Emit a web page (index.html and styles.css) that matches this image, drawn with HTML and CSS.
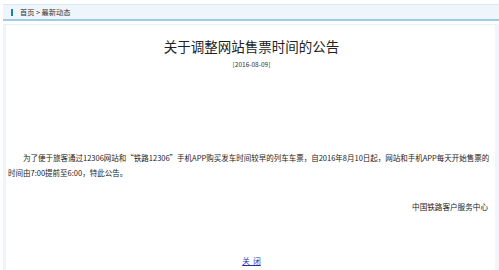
FILE: index.html
```html
<!DOCTYPE html>
<html lang="zh-CN">
<head>
  <meta charset="UTF-8">
  <link rel="stylesheet" href="styles.css">
  <title>最新动态</title>
</head>
<body>

<div class="crumb">
  <span class="crumb-mark"></span>
  <span class="crumb-text">首页 &gt; 最新动态</span>
</div>

<div class="box">
  <h1 class="title">关于调整网站售票时间的公告</h1>
  <div class="date">[2016-08-09]</div>
  <p class="body-text">为了便于旅客通过12306网站和“铁路12306”手机APP购买发车时间较早的列车车票，自2016年8月10日起，网站和手机APP每天开始售票的时间由7:00提前至6:00，特此公告。</p>
  <div class="sign">中国铁路客户服务中心</div>
  <div class="close"><a href="#">关&nbsp;&nbsp;闭</a></div>
</div>

</body>
</html>
```

FILE: styles.css
```css
body {
  margin: 0;
  padding: 4px 0 0 3px;
  background-color: #fff;
  font-family: "Noto Sans CJK SC", "Liberation Sans", sans-serif;
  color: #333;
  overflow: hidden;
}

.crumb {
  display: flex;
  align-items: center;
  height: 14px;
  background-color: #eef5fb;
  border-top: 1px solid #dbeaf5;
  border-bottom: 2px solid #9fcbe8;
  padding-left: 8px;
}

.crumb-mark {
  width: 2px;
  height: 7px;
  background-color: #1b7fbd;
  margin-right: 7px;
}

.crumb-text {
  font-size: 7.2px;
  color: #333;
}

.box {
  margin-top: 3px;
  border-top: 1px solid #e6f0f8;
  border-left: 3px solid #edf4fa;
  border-right: 4px solid #f0f6fb;
  height: 245px;
  padding: 0 0 0 2px;
}

.title {
  margin: 11px 0 0;
  text-align: center;
  font-size: 13.5px;
  font-weight: normal;
  color: #222;
  line-height: 20px;
}

.date {
  text-align: center;
  font-size: 6.5px;
  line-height: 10px;
  margin-top: 3px;
  color: #333;
}

.body-text {
  margin: 81px 0 0;
  font-size: 7.5px;
  line-height: 15px;
  text-indent: 15px;
  color: #222;
}

.sign {
  margin-top: 21px;
  text-align: right;
  font-size: 7.6px;
  line-height: 12px;
  padding-right: 7px;
  color: #222;
}

.close {
  margin-top: 42px;
  text-align: center;
  font-size: 7.6px;
  line-height: 12px;
}

.close a {
  color: #2b2ba8;
}
```
